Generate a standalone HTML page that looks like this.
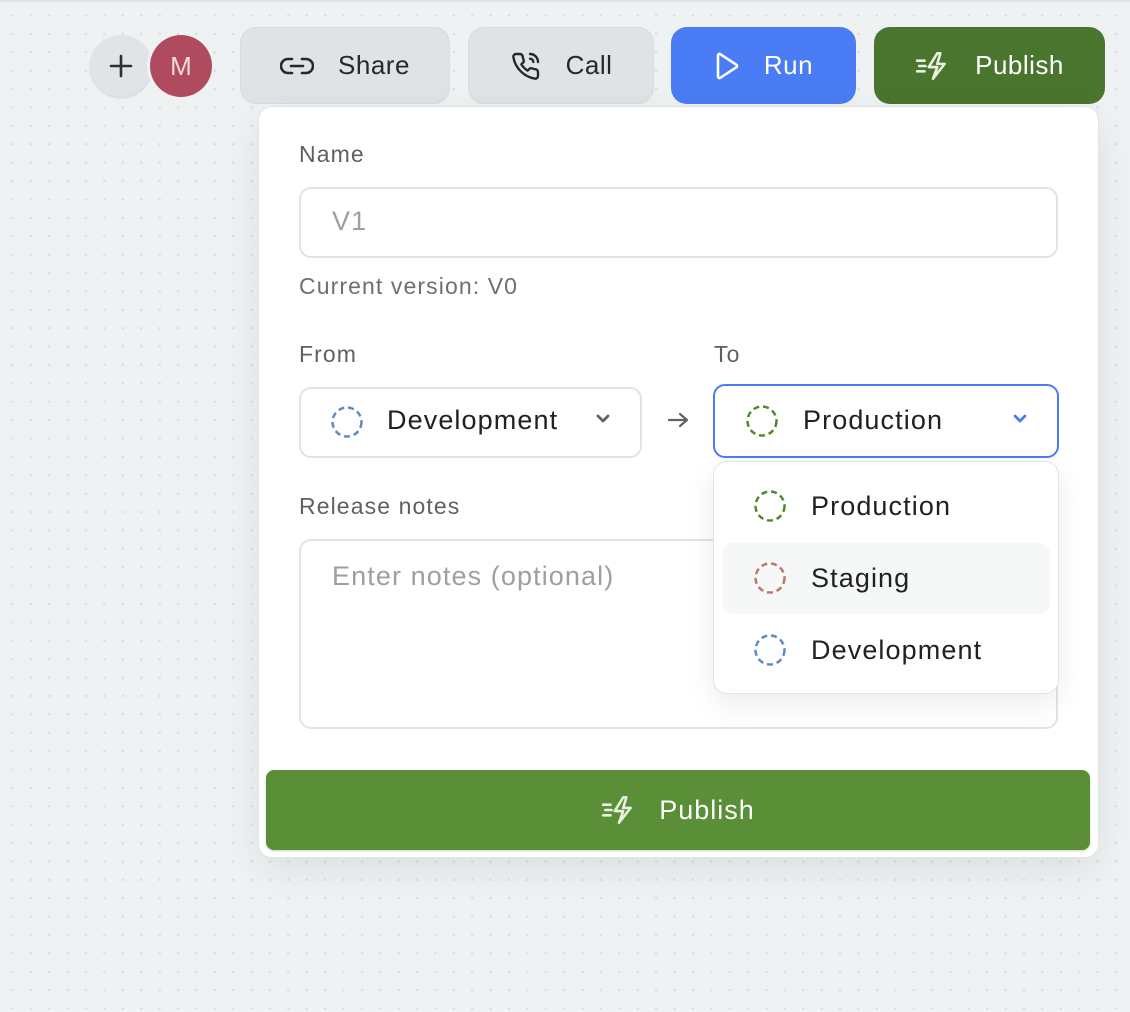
<!DOCTYPE html>
<html><head><meta charset="utf-8"><style>
*{box-sizing:border-box;margin:0;padding:0}
body{width:1130px;height:1012px;overflow:hidden;position:relative;font-family:"Liberation Sans",sans-serif;background-color:#eef2f3;
background-image:radial-gradient(circle,#d9dddf 1.1px,transparent 1.4px);background-size:18.4px 18.4px;background-position:3.3px 6.3px}
.a{position:absolute}
.btn{position:absolute;top:27px;height:77px;border-radius:16px;display:flex;align-items:center;justify-content:center;font-size:26px;gap:24px;letter-spacing:.5px}
.lbl{position:absolute;font-size:23px;color:#5c6166;letter-spacing:1.1px}
.box{position:absolute;border:2px solid #e1e3e4;border-radius:12px;background:#fff}
.t{font-size:27px;letter-spacing:1.1px;color:#202124}
.item{position:absolute;left:0;width:344px;height:70px;display:flex;align-items:center}
</style></head><body>
<div class="a" style="left:0;top:0;width:1130px;height:2px;background:#dfe2e3"></div>
<div class="a" style="left:90px;top:35px;width:62px;height:62px;border-radius:50%;background:#e1e4e6;box-shadow:0 1px 2px rgba(0,0,0,.15);display:flex;align-items:center;justify-content:center">
<svg width="26" height="26" viewBox="0 0 26 26"><path d="M13 3v20M3 13h20" stroke="#2c2f33" stroke-width="2.6" stroke-linecap="round"/></svg></div>
<div class="a" style="left:150px;top:35px;width:62px;height:62px;border-radius:50%;background:#b04a5e;color:#f4d9de;font-size:26px;display:flex;align-items:center;justify-content:center;box-shadow:-3px 0 0 #eef2f3">M</div>
<div class="btn" style="left:240px;width:210px;background:#dfe3e5;color:#25282c;border:1px solid #d8dcde">
<svg width="34" height="20" viewBox="0 0 34 20" fill="none" stroke="#25282c" stroke-width="2.6" stroke-linecap="round"><path d="M12 3H8a7 7 0 0 0 0 14h4M22 3h4a7 7 0 0 1 0 14h-4M11 10h12"/></svg>Share</div>
<div class="btn" style="left:468px;width:186px;background:#dfe3e5;color:#25282c;border:1px solid #d8dcde">
<svg width="32" height="32" viewBox="0 0 24 24" fill="none" stroke="#25282c" stroke-width="1.8" stroke-linecap="round" stroke-linejoin="round"><path d="M15 3a6 6 0 0 1 6 6M15 6.5A2.5 2.5 0 0 1 17.5 9M21 16.5v3a2 2 0 0 1-2.2 2A19.8 19.8 0 0 1 2.5 5.2 2 2 0 0 1 4.5 3h3a2 2 0 0 1 2 1.7c.1 1 .4 1.9.7 2.8a2 2 0 0 1-.5 2.1L8.5 10.8a16 16 0 0 0 4.7 4.7l1.2-1.2a2 2 0 0 1 2.1-.5c.9.3 1.8.6 2.8.7a2 2 0 0 1 1.7 2z"/></svg>Call</div>
<div class="btn" style="left:671px;width:185px;background:#4a7cf5;color:#fff">
<svg width="26" height="30" viewBox="0 0 26 30" fill="none" stroke="#fff" stroke-width="2.6" stroke-linejoin="round"><path d="M4 4.5v21a1.5 1.5 0 0 0 2.3 1.3l16-10.5a1.5 1.5 0 0 0 0-2.6l-16-10.5A1.5 1.5 0 0 0 4 4.5z"/></svg>Run</div>
<div class="btn" style="left:874px;width:231px;background:#4a752f;color:#fff">
<svg width="36" height="32" viewBox="0 0 34 30" fill="none" stroke="#e8f1e2" stroke-width="2.4" stroke-linecap="round" stroke-linejoin="round"><path d="M2 10h7M4 15h6M2 20h7M21 3l-8 13h8l-4 11 11-14h-7l3-10z"/></svg>Publish</div>

<div class="a" style="left:258px;top:106px;width:841px;height:752px;background:#fff;border:1px solid #e2e5e6;border-radius:14px;box-shadow:0 12px 40px rgba(0,0,0,.08)"></div>
<div class="lbl" style="left:299px;top:141px">Name</div>
<div class="box t" style="left:299px;top:187px;width:759px;height:71px;color:#9aa0a4;padding:17px 0 0 31px">V1</div>
<div class="lbl" style="left:299px;top:273px;color:#6b7075">Current version: V0</div>
<div class="lbl" style="left:299px;top:341px">From</div>
<div class="lbl" style="left:714px;top:341px">To</div>
<div class="box" style="left:299px;top:387px;width:343px;height:71px"></div>
<svg class="a" style="left:330px;top:405px" width="34" height="34"><circle cx="17" cy="17" r="14.5" fill="none" stroke="#5b8ac4" stroke-width="2.5" stroke-dasharray="6 3.9"/></svg>
<div class="a t" style="left:387px;top:405px">Development</div>
<svg class="a" style="left:595px;top:413px" width="16" height="12"><path d="M3 3l5 5 5-5" fill="none" stroke="#5f6368" stroke-width="2.8" stroke-linecap="round" stroke-linejoin="round"/></svg>
<svg class="a" style="left:667px;top:410px" width="24" height="20"><path d="M2 10h18M13 4l7 6-7 6" fill="none" stroke="#5f6368" stroke-width="2.2" stroke-linecap="round" stroke-linejoin="round"/></svg>
<div class="a" style="left:713px;top:384px;width:346px;height:74px;border:2.5px solid #4a7cf5;border-radius:12px;background:#fff"></div>
<svg class="a" style="left:745px;top:404px" width="34" height="34"><circle cx="17" cy="17" r="14.5" fill="none" stroke="#4c8a2e" stroke-width="2.5" stroke-dasharray="6 3.9"/></svg>
<div class="a t" style="left:803px;top:405px">Production</div>
<svg class="a" style="left:1012px;top:413px" width="16" height="12"><path d="M3 3l5 5 5-5" fill="none" stroke="#4a7cf5" stroke-width="2.8" stroke-linecap="round" stroke-linejoin="round"/></svg>

<div class="lbl" style="left:299px;top:493px">Release notes</div>
<div class="box t" style="left:299px;top:539px;width:759px;height:190px;color:#9aa0a4;padding:20px 0 0 31px">Enter notes (optional)</div>

<div class="a" style="left:713px;top:461px;width:346px;height:233px;background:#fff;border:1px solid #e2e5e6;border-radius:14px;box-shadow:0 10px 30px rgba(0,0,0,.08)">
<div class="a" style="left:9px;top:81px;width:327px;height:71px;background:#f6f8f8;border-radius:10px"></div>
<div class="item t" style="top:9px"><svg style="margin:0 24px 0 39px" width="34" height="34"><circle cx="17" cy="17" r="14.5" fill="none" stroke="#4c8a2e" stroke-width="2.5" stroke-dasharray="6 3.9"/></svg>Production</div>
<div class="item t" style="top:81px"><svg style="margin:0 24px 0 39px" width="34" height="34"><circle cx="17" cy="17" r="14.5" fill="none" stroke="#c07462" stroke-width="2.5" stroke-dasharray="6 3.9"/></svg>Staging</div>
<div class="item t" style="top:153px"><svg style="margin:0 24px 0 39px" width="34" height="34"><circle cx="17" cy="17" r="14.5" fill="none" stroke="#5b8ac4" stroke-width="2.5" stroke-dasharray="6 3.9"/></svg>Development</div>
</div>

<div class="a" style="left:266px;top:770px;width:824px;height:80px;background:#5a8f37;border-radius:8px;display:flex;align-items:center;justify-content:center;gap:22px;color:#fff;font-size:27px;letter-spacing:1px;box-shadow:0 1px 2px rgba(0,0,0,.2)">
<svg width="36" height="32" viewBox="0 0 34 30" fill="none" stroke="#e8f1e2" stroke-width="2.4" stroke-linecap="round" stroke-linejoin="round"><path d="M2 10h7M4 15h6M2 20h7M21 3l-8 13h8l-4 11 11-14h-7l3-10z"/></svg>Publish</div>
</body></html>
